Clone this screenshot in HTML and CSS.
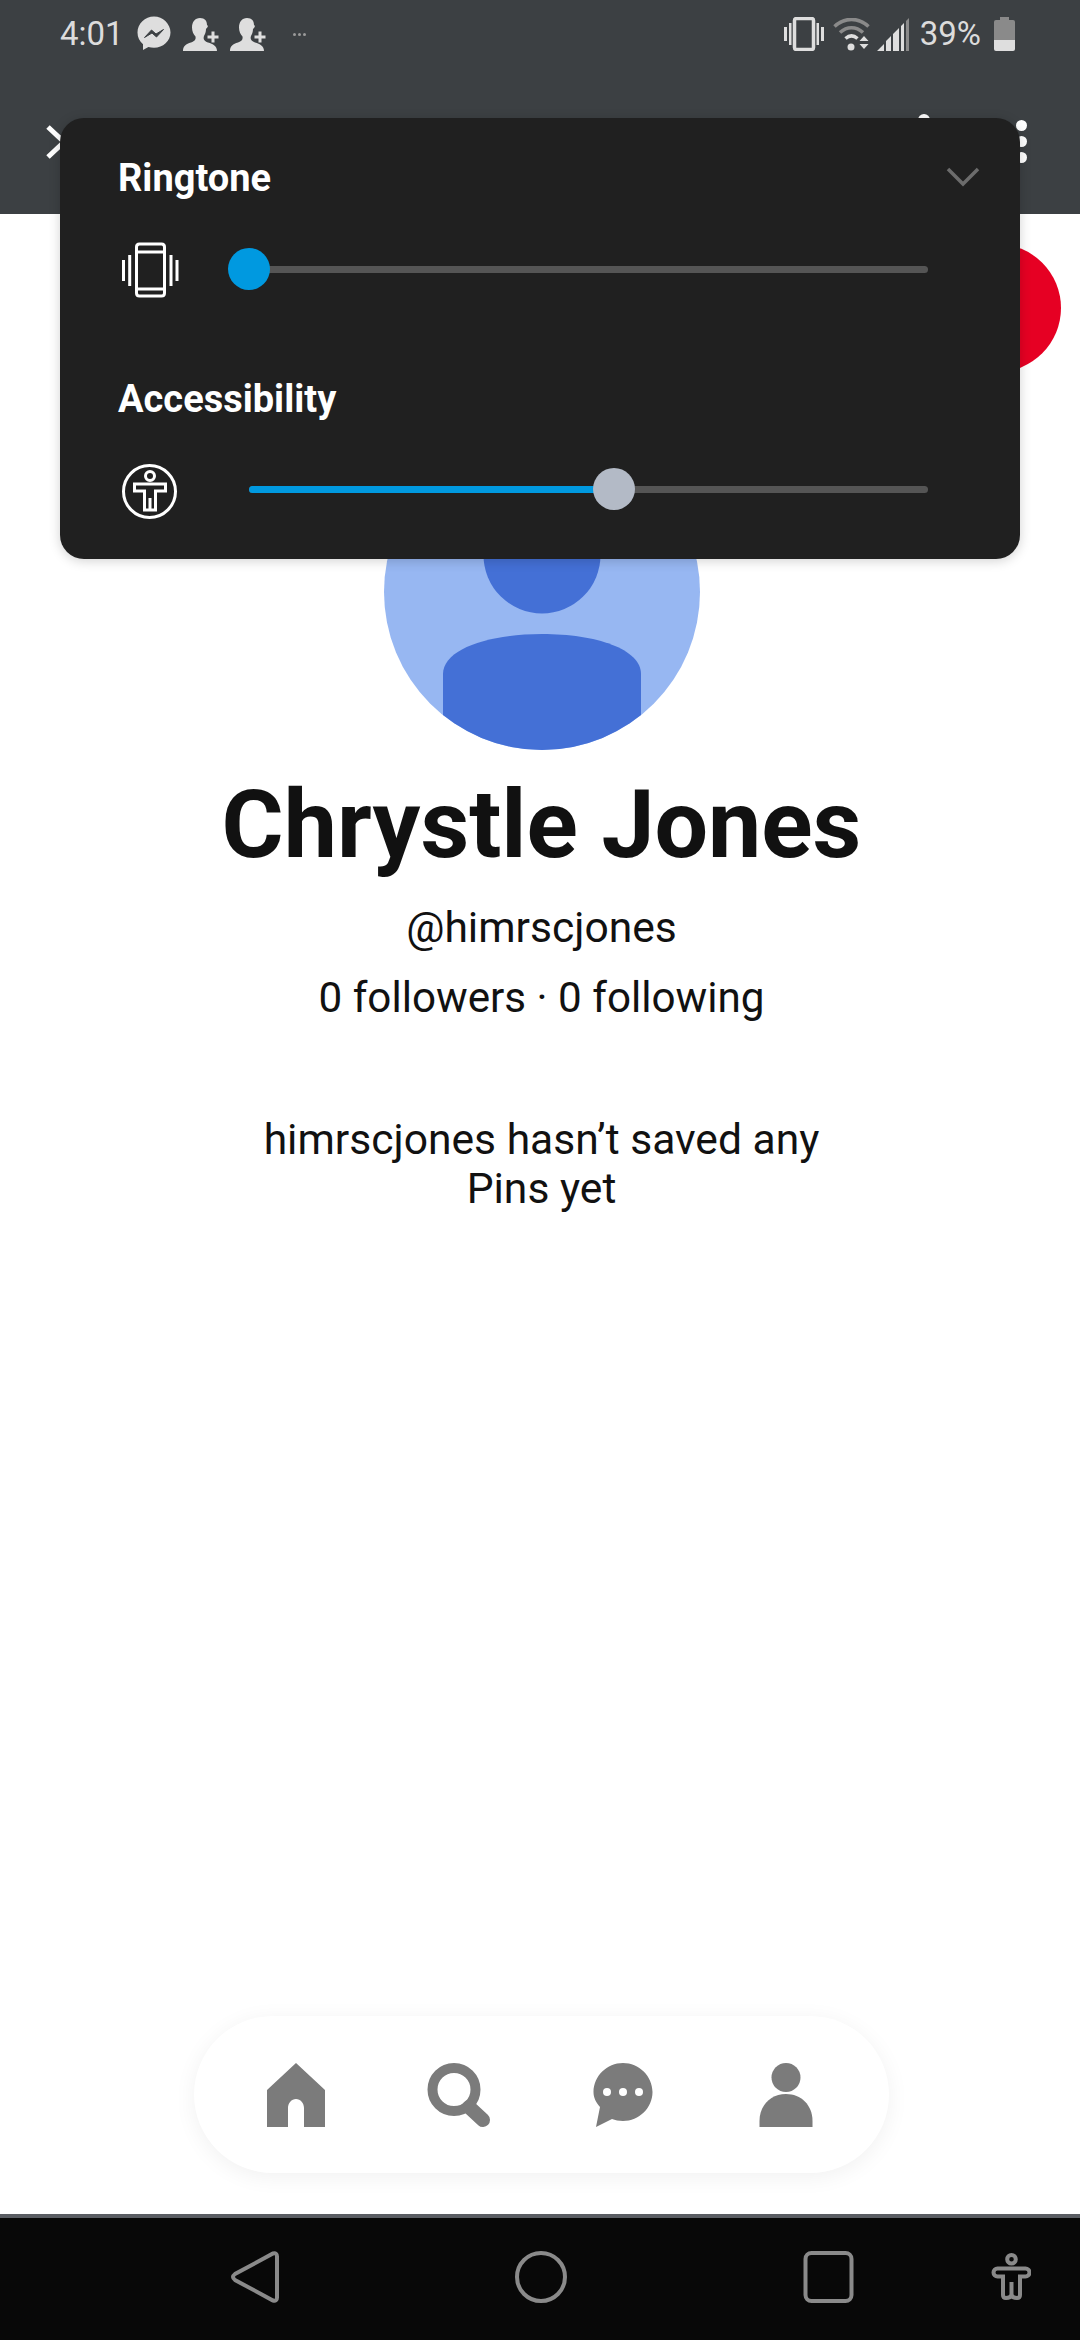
FILE: index.html
```html
<!DOCTYPE html>
<html lang="en">
<head>
    <meta charset="UTF-8">
    <meta name="viewport" content="width=device-width, initial-scale=1.0">
    <title>Chrystle Jones</title>
    <link rel="stylesheet" href="styles.css">
</head>
<body>
    <header class="top">
        <div class="status">
            <div class="status-group">
                <span class="clock">4:01</span>
                <svg class="s-messenger" viewBox="0 0 34 36"><path class="fill-light" d="M17 .5C8 .5.500 7.500.500 16.500c0 4.700 2 8.800 5.500 11.700V34l5.400-3c1.800.5 3.600.8 5.600.8 9 0 16.500-6.800 16.500-15.300S26 .5 17 .5z"/><path class="line-dark" d="M7.500 21.500l7-7.500 4.500 4 7.500-4.500-7 7.500-4.500-4z"/></svg>
                <svg class="s-person" viewBox="0 0 37 34"><path class="fill-light" d="M0 33c0-5 3-7 8-8.500 4-1.500 5-3 4.500-6-2-2-3.500-5-3.500-9C9 4 12 0 17 0s7 3 7 7c2 1 0 3-1 4 0 3-1 5-2 7-1 3 0 5 4 6.500 5 1.500 9 3.500 9 8.500z"/><path class="fill-light" d="M28.500 13.500h3v4h4v3h-4v4h-3v-4h-4v-3h4z"/></svg>
                <svg class="s-person" viewBox="0 0 37 34"><path class="fill-light" d="M0 33c0-5 3-7 8-8.500 4-1.500 5-3 4.500-6-2-2-3.500-5-3.500-9C9 4 12 0 17 0s7 3 7 7c2 1 0 3-1 4 0 3-1 5-2 7-1 3 0 5 4 6.500 5 1.500 9 3.500 9 8.500z"/><path class="fill-light" d="M28.500 13.500h3v4h4v3h-4v4h-3v-4h-4v-3h4z"/></svg>
                <span class="more-dots"><i></i><i></i><i></i></span>
            </div>
            <div class="status-group">
                <svg class="s-vibrate" viewBox="0 0 40 34"><rect x="10.500" y="1.500" width="19" height="31" rx="2" class="line-light"/><path class="fill-light" d="M0 10h3v14H0zM5 6h2.500v22H5zM32.500 6H35v22h-2.500zM37 10h3v14h-3z"/></svg>
                <svg class="s-wifi" viewBox="0 0 37 33"><path class="line-mid" d="M1.500 8.500c10-9.500 24-9.500 34 0"/><path class="line-mid" d="M7 14.500c7-6.500 16-6.500 23 0"/><path class="line-light" d="M12.500 20.500c4-3.500 8-3.500 12 0"/><circle class="fill-light" cx="18" cy="29" r="3.500"/><path class="fill-light" d="M31 18l4.500 5h-9zM26.500 26h9L31 31z"/></svg>
                <svg class="s-signal" viewBox="0 0 33 33"><path class="fill-light" d="M0 33l7-7v7zM9 33V23l5-5v15zM16 33V16l6-6v23z M24 33V8l3-3v28z"/><path class="fill-mid" d="M29 33V3l3-3v33z"/></svg>
                <span class="battery-text">39%</span>
                <span class="battery"></span>
            </div>
        </div>
        <div class="toolbar">
            <svg class="t-close" viewBox="0 0 24 36"><path d="M3 3l16 15L3 33"/></svg>
            <span class="t-dot t-dot-share"></span>
            <span class="t-menu"><i></i><i></i><i></i></span>
        </div>
    </header>

    <section class="volume">
        <svg class="vol-chevron" viewBox="0 0 34 20"><path d="M2 2l15 15L32 2"/></svg>
        <h2 class="vol-title">Ringtone</h2>
        <div class="vol-row">
            <svg class="vol-icon" viewBox="0 0 60 56"><path d="M18.500 6q0-3 3-3h22q3 0 3 3v46q0 3-3 3h-22q-3 0-3-3zM18.500 11h28M18.500 48h28M11.700 14v31M5.500 19v21M53 14v31M59 19v21"/></svg>
            <div class="slider">
                <span class="track"></span>
                <span class="thumb thumb-blue thumb-start"></span>
            </div>
        </div>
        <h2 class="vol-title vol-title-second">Accessibility</h2>
        <div class="vol-row vol-row-second">
            <svg class="vol-icon" viewBox="0 0 60 56"><circle cx="31.500" cy="30.500" r="26"/><circle cx="32" cy="15" r="4.500"/><path d="M16.500 23h31v7H37.500v19h-11V30H16.500zM32 37v12"/></svg>
            <div class="slider">
                <span class="track"></span>
                <span class="track-fill" style="width: 53.800%"></span>
                <span class="thumb thumb-gray" style="left: 53.800%"></span>
            </div>
        </div>
    </section>

    <main class="profile">
        <span class="red-dot"></span>
        <svg class="avatar" viewBox="0 0 316 316">
            <defs><clipPath id="avatarClip"><circle cx="158" cy="158" r="158"/></clipPath></defs>
            <circle cx="158" cy="158" r="158" fill="#97b7f2"/>
            <g clip-path="url(#avatarClip)" fill="#4470d6">
                <circle cx="158" cy="121" r="58.500"/>
                <path d="M59 316V240c0-25 45-40 99-40s99 15 99 40v76z"/>
            </g>
        </svg>
        <h1 class="name">Chrystle Jones</h1>
        <p class="handle">@himrscjones</p>
        <p class="counts">0 followers · 0 following</p>
        <p class="empty">himrscjones hasn’t saved any<br>Pins yet</p>

        <nav class="pill">
            <svg class="pill-icon" viewBox="0 0 60 64"><path d="M30 0l29 27v37H38V45c0-5-3.500-9-8-9s-8 4-8 9v19H1V27z"/></svg>
            <svg class="pill-icon" viewBox="0 0 64 64"><circle cx="27" cy="26.500" r="21.500" fill="none" stroke="#7b7b7b" stroke-width="10"/><path d="M42 44l14 13" fill="none" stroke="#7b7b7b" stroke-width="14" stroke-linecap="round"/></svg>
            <svg class="pill-icon" viewBox="0 0 60 64"><path d="M30 0c16 0 29.500 13 29.500 29S46 58 30 58c-4 0-8-1-11-2L3 64l4-20C3 39 .5 35 .5 29 .5 13 14 0 30 0z"/><g fill="#fff"><circle cx="14" cy="29" r="4"/><circle cx="30" cy="29" r="4"/><circle cx="46" cy="29" r="4"/></g></svg>
            <svg class="pill-icon" viewBox="0 0 54 64"><circle cx="27" cy="14.500" r="14.500"/><path d="M.5 64V58C.5 42 12 31 27 31s26.500 11 26.500 27v6z"/></svg>
        </nav>
    </main>

    <footer class="softkeys">
        <svg class="key" viewBox="0 0 60 56"><path d="M49 4.500q4-1 4 3v41q0 4-4 3L11 31q-4-3 0-6z"/></svg>
        <svg class="key" viewBox="0 0 60 56"><circle cx="30" cy="28" r="24"/></svg>
        <svg class="key" viewBox="0 0 60 56"><rect x="7.500" y="4" width="46" height="48" rx="6"/></svg>
        <svg class="key key-small" viewBox="0 0 40 52"><circle cx="20.500" cy="10.300" r="4.300"/><path d="M6.500 19.500H34.500a4 4 0 0 1 0 8H29V46q0 3-3 3q-4.500 0-5.500-3q-1 3-5.500 3q-3 0-3-3V27.500H6.500a4 4 0 0 1 0-8zM20.500 33V46"/></svg>
    </footer>
</body>
</html>
```

FILE: styles.css
```css
* {
    box-sizing: border-box;
}

html, body {
    margin: 0;
    padding: 0;
}

body {
    position: relative;
    width: 1080px;
    height: 2340px;
    display: flex;
    flex-direction: column;
    font-family: Roboto, "Liberation Sans", sans-serif;
    background-color: #fff;
    overflow: hidden;
}

/* top bar */
.top {
    height: 214px;
    background-color: #3c4043;
    flex-shrink: 0;
}

.status {
    height: 68px;
    padding: 17px 65px 0 60px;
    display: flex;
    justify-content: space-between;
    align-items: flex-start;
}

.status-group {
    display: flex;
    align-items: center;
    height: 34px;
}

.clock, .battery-text {
    font-size: 33px;
    line-height: 34px;
    color: #dcdcdc;
}

.fill-light { fill: #dedede; }
.fill-mid { fill: #8a8a8a; }
.line-dark { fill: #3c4043; stroke: #3c4043; stroke-width: 1; }
.line-light { fill: none; stroke: #dedede; stroke-width: 3.5; }
.line-mid { fill: none; stroke: #8a8a8a; stroke-width: 3.5; }

.s-messenger { width: 34px; height: 36px; margin-left: 13px; }
.s-person { width: 37px; height: 34px; margin: 2px 0 0 12px; }
.s-person + .s-person { margin-left: 10px; }

.more-dots {
    display: flex;
    gap: 2px;
    margin-left: 26px;
}

.more-dots i {
    width: 3px;
    height: 3px;
    border-radius: 50%;
    background-color: #9a9a9a;
}

.s-vibrate { width: 40px; height: 34px; }
.s-wifi { width: 37px; height: 33px; margin-left: 9px; }
.s-signal { width: 33px; height: 33px; margin-left: 7px; }
.battery-text { margin-left: 10px; }

.battery {
    position: relative;
    width: 21px;
    height: 31px;
    margin: 2px 0 0 13px;
    border-radius: 2px;
    background: linear-gradient(#8a8a8a 0, #8a8a8a 64%, #dedede 64%);
}

.battery::before {
    content: "";
    position: absolute;
    top: -3px;
    left: 6px;
    width: 9px;
    height: 3px;
    background-color: #8a8a8a;
}

.toolbar {
    height: 146px;
    padding: 0 53px 0 45px;
    display: flex;
    align-items: flex-start;
    justify-content: space-between;
}

.t-close {
    width: 24px;
    height: 36px;
    margin-top: 56px;
    fill: none;
    stroke: #fff;
    stroke-width: 5;
}

.t-dot-share {
    width: 12px;
    height: 12px;
    margin: 46px 0 0 auto;
    border-radius: 50%;
    background-color: #fff;
}

.t-menu {
    display: flex;
    flex-direction: column;
    gap: 5px;
    margin: 52px 0 0 86px;
}

.t-menu i {
    width: 11px;
    height: 11px;
    border-radius: 50%;
    background-color: #fff;
}

/* volume popup */
.volume {
    position: absolute;
    top: 118px;
    left: 60px;
    width: 960px;
    height: 441px;
    padding: 38px 58px 0;
    background-color: #202020;
    border-radius: 24px;
    box-shadow: 0 2px 12px rgba(0, 0, 0, 0.18);
    z-index: 2;
}

.vol-chevron {
    position: absolute;
    top: 49px;
    right: 40px;
    width: 34px;
    height: 20px;
    fill: none;
    stroke: #6c6c6c;
    stroke-width: 3.5;
}

.vol-title {
    margin: 0;
    height: 44px;
    font-size: 38px;
    line-height: 44px;
    font-weight: 700;
    color: #fff;
}

.vol-title-second {
    margin-top: 80px;
}

.vol-row {
    display: flex;
    align-items: center;
    height: 56px;
    margin-top: 41px;
}

.vol-row-second {
    margin-top: 40px;
}

.vol-icon {
    width: 60px;
    height: 56px;
    fill: none;
    stroke: #fff;
    stroke-width: 3;
    overflow: visible;
}

.slider {
    position: relative;
    width: 679px;
    height: 42px;
    margin-left: 71px;
}

.track, .track-fill {
    position: absolute;
    top: 18px;
    left: 0;
    height: 7px;
    border-radius: 4px;
}

.track {
    width: 100%;
    background-color: #555;
}

.track-fill {
    background-color: #0099e0;
}

.thumb {
    position: absolute;
    top: 0;
    width: 42px;
    height: 42px;
    margin-left: -21px;
    border-radius: 50%;
}

.thumb-blue { background-color: #0099e0; }
.thumb-gray { background-color: #b3bac6; }
.thumb-start { left: 0; }

/* profile */
.profile {
    position: relative;
    flex: 1;
    display: flex;
    flex-direction: column;
    align-items: center;
    padding: 220px 0 0 3px;
}

.red-dot {
    position: absolute;
    top: 30px;
    left: 933px;
    width: 128px;
    height: 128px;
    border-radius: 50%;
    background-color: #e60023;
}

.avatar {
    width: 316px;
    height: 316px;
    flex-shrink: 0;
}

.name {
    margin: 16px 0 0;
    font-size: 95px;
    line-height: 118px;
    font-weight: 700;
    color: #111;
}

.handle, .counts, .empty {
    margin: 0;
    font-size: 42.600px;
    line-height: 50px;
    color: #111;
    text-align: center;
}

.handle { margin-top: 18px; }
.counts { margin-top: 21px; font-size: 42.200px; }
.empty { margin-top: 92px; line-height: 49px; }

.pill {
    width: 695px;
    height: 157px;
    margin-top: auto;
    margin-bottom: 41px;
    padding: 47px 21px 0 20px;
    display: grid;
    grid-template-columns: repeat(4, 1fr);
    justify-items: center;
    align-items: start;
    border-radius: 80px;
    background-color: #fff;
    box-shadow: 0 4px 22px rgba(0, 0, 0, 0.06);
}

.pill-icon {
    height: 64px;
    width: auto;
    fill: #7b7b7b;
}

/* android softkeys */
.softkeys {
    height: 126px;
    flex-shrink: 0;
    padding: 31px 0 0 224px;
    display: flex;
    align-items: flex-start;
    background-color: #080808;
    border-top: 4px solid #5a5d63;
}

.key {
    width: 60px;
    height: 56px;
    fill: none;
    stroke: #8a8a8a;
    stroke-width: 4;
}

.key + .key {
    margin-left: 227px;
}

.key + .key-small {
    width: 40px;
    height: 52px;
    margin-left: 133px;
}
```
